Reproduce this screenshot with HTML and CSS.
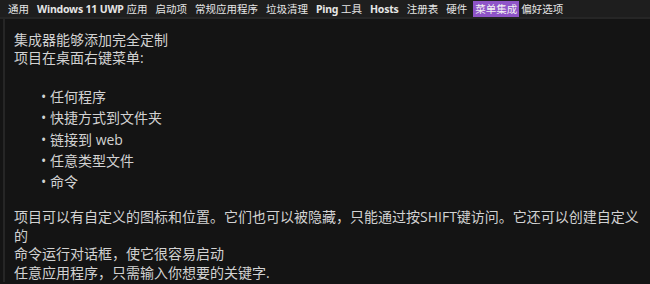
FILE: index.html
```html
<!DOCTYPE html>
<html lang="zh-CN">
<head>
    <meta charset="UTF-8">
    <meta name="viewport" content="width=device-width, initial-scale=1.0">
    <title>菜单集成</title>
    <link rel="stylesheet" href="styles.css">
</head>
<body>
    <div class="tabs">
        <span class="tab">通用</span>
        <span class="tab"><b>Windows 11 UWP</b> 应用</span>
        <span class="tab">启动项</span>
        <span class="tab">常规应用程序</span>
        <span class="tab">垃圾清理</span>
        <span class="tab"><b>Ping</b> 工具</span>
        <span class="tab"><b>Hosts</b></span>
        <span class="tab">注册表</span>
        <span class="tab">硬件</span>
        <span class="tab active">菜单集成</span>
        <span class="tab">偏好选项</span>
    </div>
    <div class="panel">
        <p class="intro">集成器能够添加完全定制<br>项目在桌面右键菜单:</p>
        <ul class="features">
            <li>任何程序</li>
            <li>快捷方式到文件夹</li>
            <li>链接到 web</li>
            <li>任意类型文件</li>
            <li>命令</li>
        </ul>
        <p class="details">项目可以有自定义的图标和位置。它们也可以被隐藏，只能通过按SHIFT键访问。它还可以创建自定义<br>的<br>命令运行对话框，使它很容易启动<br>任意应用程序，只需输入你想要的关键字.</p>
    </div>
</body>
</html>
```
FILE: styles.css
```css
body{
    margin:0;
    background-color:#141414;
    color:#d2d2d2;
    font-family:"Open Sans","Noto Sans CJK SC",sans-serif;
    overflow:hidden;
}
.tabs{
    display:flex;
    align-items:center;
    height:17px;
    padding-left:6px;
    background-color:#1e1e1e;
    border-bottom:2px solid #262626;
    font-size:10.5px;
    color:#e6e6e6;
    white-space:nowrap;
}
.tab{
    padding:0 2px;
    margin-right:4px;
    line-height:16px;
}
.tab b{
    font-family:"Noto Sans",sans-serif;
    font-weight:700;
    letter-spacing:-0.2px;
}
.tab.active{
    background-color:#8f54c8;
    color:#f2f2f2;
    margin-right:0;
}
.panel{
    margin-left:3px;
    border-left:2px solid #262626;
    padding:12px 8px 0 9px;
    font-size:14px;
    line-height:18px;
}
.intro{
    margin:0;
}
.features{
    margin:19px 0 0;
    padding-left:36px;
    line-height:21.25px;
    list-style-type:"• ";
}
.details{
    margin:16px 0 0;
    line-height:18.5px;
}
```
